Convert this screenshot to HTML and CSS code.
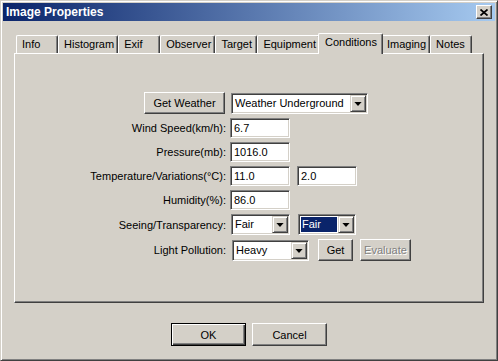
FILE: index.html
```html
<!DOCTYPE html>
<html>
  <head>
    <meta charset="UTF-8">
    <title>Image Properties</title>
    <link rel="stylesheet" href="styles.css">
  </head>
  <body>
    <div class="window">
      <div class="titlebar">
        <span class="title">Image Properties</span>
        <button class="close" type="button">
          <svg width="8" height="7" viewBox="0 0 8 7"><path d="M0.5 0.5L7.5 6.5M7.5 0.5L0.5 6.5" stroke="#000" stroke-width="1.7"/></svg>
        </button>
      </div>
      <div class="tabs">
        <div class="tab">Info</div>
        <div class="tab">Histogram</div>
        <div class="tab">Exif</div>
        <div class="tab">Observer</div>
        <div class="tab">Target</div>
        <div class="tab">Equipment</div>
        <div class="tab active">Conditions</div>
        <div class="tab">Imaging</div>
        <div class="tab">Notes</div>
      </div>
      <div class="panel">
        <div class="form">
          <div class="cell-right"><button class="btn btn-weather" type="button">Get Weather</button></div>
          <div class="fields">
            <div class="combo combo-source"><span class="combo-text">Weather Underground</span><span class="combo-btn"></span></div>
          </div>

          <label class="lbl">Wind Speed(km/h):</label>
          <div class="fields"><input class="field" type="text" value="6.7"></div>

          <label class="lbl">Pressure(mb):</label>
          <div class="fields"><input class="field" type="text" value="1016.0"></div>

          <label class="lbl">Temperature/Variations(°C):</label>
          <div class="fields">
            <input class="field" type="text" value="11.0">
            <input class="field" type="text" value="2.0">
          </div>

          <label class="lbl">Humidity(%):</label>
          <div class="fields"><input class="field" type="text" value="86.0"></div>

          <label class="lbl">Seeing/Transparency:</label>
          <div class="fields fields-seeing">
            <div class="combo combo-seeing"><span class="combo-text">Fair</span><span class="combo-btn"></span></div>
            <div class="combo combo-transp"><span class="combo-text selected">Fair</span><span class="combo-btn"></span></div>
          </div>

          <label class="lbl">Light Pollution:</label>
          <div class="fields fields-light">
            <div class="combo combo-light"><span class="combo-text">Heavy</span><span class="combo-btn"></span></div>
            <button class="btn btn-get" type="button">Get</button>
            <button class="btn btn-eval" type="button" disabled>Evaluate</button>
          </div>
        </div>
      </div>
      <div class="actions">
        <button class="btn btn-action btn-default" type="button">OK</button>
        <button class="btn btn-action" type="button">Cancel</button>
      </div>
    </div>
  </body>
</html>
```

FILE: styles.css
```css
body {
  margin: 0;
  background: #d4d0c8;
  font-family: "Liberation Sans", Arial, sans-serif;
  font-size: 11px;
  color: #000;
}

.window {
  width: 498px;
  height: 361px;
  box-sizing: border-box;
  border: 1px solid;
  border-color: #d4d0c8 #404040 #404040 #d4d0c8;
  box-shadow: inset 1px 1px #fff, inset -1px -1px #808080;
  padding: 2px;
  background: #d4d0c8;
}

/* title bar */
.titlebar {
  height: 18px;
  display: flex;
  align-items: center;
  justify-content: space-between;
  padding: 0 3px 0 3px;
  background: linear-gradient(to right, #0a246a, #a6caf0);
}
.title {
  color: #fff;
  font-weight: bold;
  font-size: 12px;
}
.close {
  width: 16px;
  height: 14px;
  padding: 0;
  display: flex;
  align-items: center;
  justify-content: center;
  background: #d4d0c8;
  border: 1px solid;
  border-color: #fff #404040 #404040 #fff;
  box-shadow: inset -1px -1px #808080;
}

/* tabs */
.tabs {
  display: flex;
  align-items: flex-end;
  height: 20px;
  margin: 12px 11px 0 13px;
}
.tab {
  height: 18px;
  min-width: 42px;
  box-sizing: border-box;
  padding: 0 3px 0 5px;
  line-height: 17px;
  border: 1px solid;
  border-bottom: none;
  border-color: #fff #404040 #404040 #fff;
  box-shadow: inset -1px 0 #808080;
  border-radius: 2px 2px 0 0;
  background: #d4d0c8;
}
.tab.active {
  height: 21px;
  margin: 0 -2px -1px;
  padding: 0 5px 0 6px;
  line-height: 16px;
  position: relative;
  z-index: 1;
}

.panel {
  height: 250px;
  box-sizing: border-box;
  margin: 0 11px;
  border: 1px solid;
  border-color: #fff #404040 #404040 #fff;
  box-shadow: inset -1px -1px #808080;
}

/* form */
.form {
  display: grid;
  grid-template-columns: 211px 1fr;
  column-gap: 4px;
  row-gap: 4px;
  align-items: center;
  padding-top: 38px;
}
.lbl {
  text-align: right;
  white-space: nowrap;
}
.cell-right {
  display: flex;
  justify-content: flex-end;
}
.fields {
  display: flex;
  align-items: center;
  gap: 7px;
}
.fields-seeing {
  gap: 8px;
}
.fields-light {
  gap: 0;
}

.field {
  width: 60px;
  height: 20px;
  box-sizing: border-box;
  margin: 0;
  padding: 0 3px;
  font: inherit;
  color: #000;
  background: #fff;
  border: 1px solid;
  border-color: #808080 #fff #fff #808080;
  box-shadow: inset 1px 1px #404040, inset -1px -1px #d4d0c8;
  outline: none;
}

.combo {
  display: flex;
  height: 21px;
  box-sizing: border-box;
  padding: 1px;
  background: #fff;
  border: 1px solid;
  border-color: #808080 #fff #fff #808080;
  box-shadow: inset 1px 1px #404040, inset -1px -1px #d4d0c8;
}
.combo-text {
  flex: 1;
  padding-left: 2px;
  line-height: 17px;
  white-space: nowrap;
}
.combo-text.selected {
  margin: 1px;
  padding-left: 1px;
  line-height: 15px;
  background: #0a246a;
  color: #fff;
}
.combo-btn {
  width: 16px;
  height: 17px;
  box-sizing: border-box;
  position: relative;
  background: #d4d0c8;
  border: 1px solid;
  border-color: #d4d0c8 #404040 #404040 #d4d0c8;
  box-shadow: inset 1px 1px #fff, inset -1px -1px #808080;
}
.combo-btn::after {
  content: "";
  position: absolute;
  left: 3px;
  top: 6px;
  border-style: solid;
  border-width: 4px 4px 0 4px;
  border-color: #000 transparent transparent transparent;
  transform: scaleX(0.9);
}
.combo-source {
  width: 137px;
  margin-left: 1px;
}
.combo-seeing {
  width: 59px;
  margin-left: 1px;
}
.combo-transp {
  width: 58px;
}
.combo-light {
  width: 77px;
  margin-left: 2px;
}

/* buttons */
.btn {
  height: 22px;
  box-sizing: border-box;
  margin: 0;
  padding: 0;
  font: inherit;
  color: #000;
  background: #d4d0c8;
  border: 1px solid;
  border-color: #fff #404040 #404040 #fff;
  box-shadow: inset -1px -1px #808080;
}
.btn-weather {
  width: 81px;
  margin-right: 1px;
}
.btn-get {
  width: 35px;
  margin-left: 9px;
}
.btn-eval {
  width: 51px;
  margin-left: 7px;
  color: #808080;
  text-shadow: 1px 1px #fff;
}

.actions {
  display: flex;
  justify-content: center;
  gap: 6px;
  margin-top: 20px;
}
.btn-action {
  width: 75px;
  height: 23px;
}
.btn-default {
  border-color: #000;
  box-shadow: inset 1px 1px #fff, inset -1px -1px #404040, inset -2px -2px #808080;
}
```
